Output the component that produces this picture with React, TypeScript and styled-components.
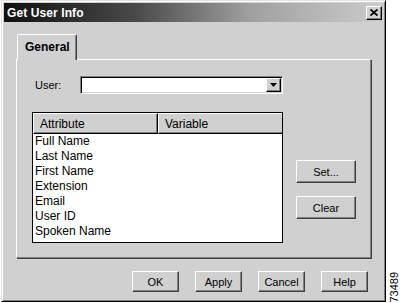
import React from 'react'
import styled, { createGlobalStyle } from 'styled-components'

// ____________________________________________________________________________
//
const ATTRIBUTES = [
  'Full Name',
  'Last Name',
  'First Name',
  'Extension',
  'Email',
  'User ID',
  'Spoken Name',
]

const FONT = `"Liberation Sans", Arial, sans-serif`
const FACE = '#d0d0d0'

// ____________________________________________________________________________
//
export default function App() {
  return (
    <>
      <GlobalStyle />
      <Page>
        <Window>
          <TitleBar>
            <Title>Get User Info</Title>
            <CloseButton aria-label="Close">
              <svg width="8" height="7" viewBox="0 0 8 7">
                <path d="M0.5 0.5 L7.5 6.5 M7.5 0.5 L0.5 6.5" stroke="#000" strokeWidth="1.8" />
              </svg>
            </CloseButton>
          </TitleBar>
          <Body>
            <Tabs>
              <Tab>General</Tab>
            </Tabs>
            <Panel>
              <UserRow>
                <Label>User:</Label>
                <Combo>
                  <DropButton>
                    <svg width="7" height="4" viewBox="0 0 7 4">
                      <path d="M0 0 H7 L3.5 4 Z" fill="#000" />
                    </svg>
                  </DropButton>
                </Combo>
              </UserRow>
              <ListRow>
                <List>
                  <HeaderRow>
                    <HeaderCell $width={125}>Attribute</HeaderCell>
                    <HeaderCell $width={125}>Variable</HeaderCell>
                  </HeaderRow>
                  {ATTRIBUTES.map((name) => (
                    <Item key={name}>{name}</Item>
                  ))}
                </List>
                <SideButtons>
                  <Button $width={60} $height={23}>Set...</Button>
                  <Button $width={60} $height={23}>Clear</Button>
                </SideButtons>
              </ListRow>
            </Panel>
            <Footer>
              <Button $width={47} $height={21}>OK</Button>
              <Button $width={47} $height={21}>Apply</Button>
              <Button $width={47} $height={21}>Cancel</Button>
              <Button $width={47} $height={21}>Help</Button>
            </Footer>
          </Body>
        </Window>
        <Margin>
          <FigureNumber>73489</FigureNumber>
        </Margin>
      </Page>
    </>
  )
}
// ____________________________________________________________________________
//
const GlobalStyle = createGlobalStyle`
  * { box-sizing: border-box; }
  body {
    margin: 0;
    background: #fff;
    font-family: ${FONT};
  }
`

const Page = styled.div`
  display: flex;
  width: 400px;
  height: 303px;
`

const Window = styled.div`
  width: 385px;
  height: 302px;
  margin-left: 1px;
  background: ${FACE};
  border: 1px solid;
  border-color: #e2e2e2 #000 #000 #e2e2e2;
  box-shadow: inset 1px 1px 0 #fff, inset -1px -1px 0 #808080;
  padding: 2px;
  display: flex;
  flex-direction: column;
`

const TitleBar = styled.div`
  height: 19px;
  display: flex;
  align-items: center;
  justify-content: space-between;
  padding: 0 1px 0 3px;
  background: linear-gradient(to right, #101010 0%, #4a4a4a 35%, #a0a0a0 65%, #cbcbcb 100%);
`

const Title = styled.span`
  color: #fff;
  font-weight: bold;
  font-size: 12px;
  letter-spacing: 0.1px;
`

const CloseButton = styled.button`
  width: 16px;
  height: 14px;
  padding: 0;
  display: flex;
  align-items: center;
  justify-content: center;
  background: ${FACE};
  border: 1px solid;
  border-color: #fff #000 #000 #fff;
  box-shadow: inset -1px -1px 0 #808080;
`

const Body = styled.div`
  flex: 1;
  padding: 12px 0 0 12px;
  display: flex;
  flex-direction: column;
`

const Tabs = styled.div`
  display: flex;
  padding-left: 1px;
  position: relative;
  z-index: 1;
  margin-bottom: -1px;
`

const Tab = styled.div`
  width: 60px;
  height: 26px;
  padding: 5px 0 0 7px;
  font-size: 12px;
  font-weight: bold;
  background: ${FACE};
  border-top: 1px solid #fff;
  border-left: 1px solid #fff;
  border-right: 1px solid #404040;
  box-shadow: inset -1px 0 0 #808080;
  border-radius: 2px 2px 0 0;
`

const Panel = styled.div`
  width: 355px;
  height: 199px;
  padding: 16px 0 0 15px;
  border: 1px solid;
  border-color: #fff #808080 #808080 #fff;
  box-shadow: 1px 1px 0 #404040;
`

const UserRow = styled.div`
  display: flex;
  align-items: center;
  margin-left: 3px;
  height: 18px;
`

const Label = styled.span`
  width: 45px;
  font-size: 11px;
`

const Combo = styled.div`
  width: 203px;
  height: 18px;
  background: #fff;
  border: 1px solid;
  border-color: #808080 #fff #fff #808080;
  box-shadow: inset 1px 1px 0 #000, inset -1px -1px 0 ${FACE};
  display: flex;
  justify-content: flex-end;
  align-items: center;
  padding-right: 1px;
`

const DropButton = styled.div`
  width: 15px;
  height: 14px;
  display: flex;
  align-items: center;
  justify-content: center;
  background: ${FACE};
  border: 1px solid;
  border-color: #fff #000 #000 #fff;
  box-shadow: inset -1px -1px 0 #808080;
`

const ListRow = styled.div`
  display: flex;
  gap: 13px;
  margin-top: 18px;
`

const List = styled.div`
  width: 251px;
  height: 131px;
  background: #fff;
  border: 1px solid #000;
`

const HeaderRow = styled.div`
  display: flex;
  height: 21px;
`

const HeaderCell = styled.div<{ $width: number }>`
  width: ${(p) => p.$width}px;
  flex: none;
  display: flex;
  align-items: center;
  padding-left: 6px;
  font-size: 12px;
  background: ${FACE};
  border: 1px solid;
  border-color: #fff #000 #000 #fff;
  box-shadow: inset -1px -1px 0 #808080;
  &:last-child {
    flex: 1;
    border-right: none;
    box-shadow: inset 0 -1px 0 #808080;
  }
`

const Item = styled.div`
  height: 15px;
  line-height: 15px;
  padding-left: 2px;
  font-size: 12px;
`

const SideButtons = styled.div`
  display: flex;
  flex-direction: column;
  gap: 13px;
  padding-top: 48px;
`

const Button = styled.button<{ $width: number; $height: number }>`
  width: ${(p) => p.$width}px;
  height: ${(p) => p.$height}px;
  padding: 0;
  font-family: ${FONT};
  font-size: 11px;
  color: #000;
  background: ${FACE};
  border: 1px solid;
  border-color: #fff #404040 #404040 #fff;
  box-shadow: inset -1px -1px 0 #808080;
`

const Footer = styled.div`
  display: flex;
  gap: 16px;
  margin-top: 13px;
  padding-left: 116px;
`

const Margin = styled.div`
  flex: 1;
  display: flex;
  align-items: flex-end;
  justify-content: center;
  padding-left: 2px;
`

const FigureNumber = styled.span`
  writing-mode: vertical-rl;
  transform: rotate(180deg);
  font-size: 11px;
  line-height: 11px;
  color: #000;
`
